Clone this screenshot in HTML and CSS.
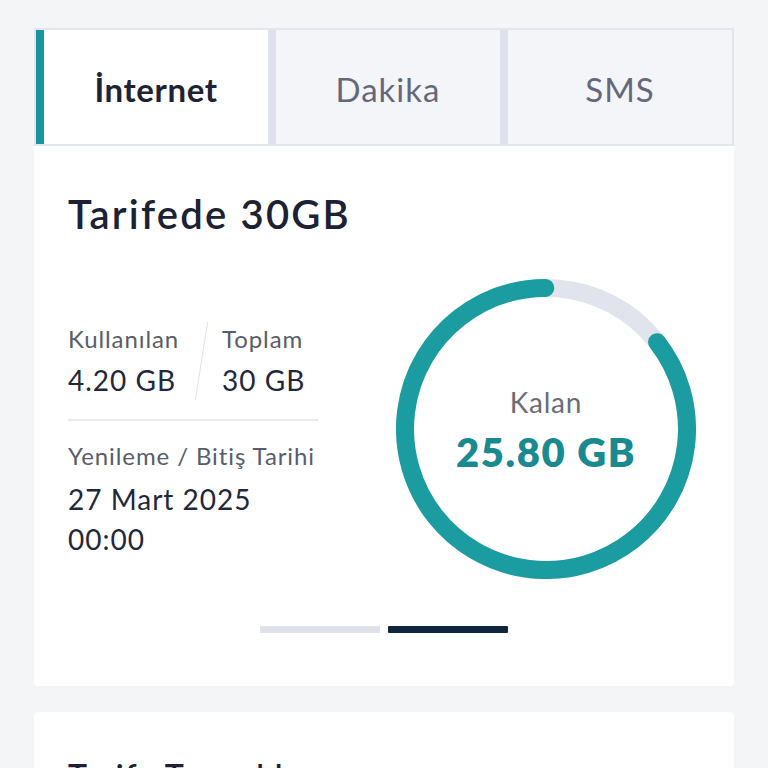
FILE: index.html
```html
<!DOCTYPE html>
<html lang="tr">
<head>
<meta charset="utf-8">
<link rel="stylesheet" href="styles.css">
</head>
<body>
<div class="wrap">
  <div class="card main">
    <div class="tabs">
      <div class="tab active">İnternet</div>
      <div class="tab">Dakika</div>
      <div class="tab">SMS</div>
    </div>
    <div class="body">
      <h1 class="title">Tarifede 30GB</h1>
      <div class="content">
        <div class="stats">
          <div class="pair">
            <div class="col">
              <div class="label">Kullanılan</div>
              <div class="value">4.20 GB</div>
            </div>
            <div class="slash"></div>
            <div class="col">
              <div class="label">Toplam</div>
              <div class="value">30 GB</div>
            </div>
          </div>
          <div class="hr"></div>
          <div class="label">Yenileme / Bitiş Tarihi</div>
          <div class="value date">27 Mart 2025<br>00:00</div>
        </div>
        <div class="ring">
          <svg viewBox="0 0 300 300" width="300" height="300">
            <circle cx="150" cy="150" r="141" fill="none" stroke="#e1e4ec" stroke-width="18"/>
            <circle cx="150" cy="150" r="141" fill="none" stroke="#1a9ca1" stroke-width="18" stroke-linecap="round" stroke-dasharray="757 886" transform="rotate(-38 150 150)"/>
          </svg>
          <div class="ring-text">
            <div class="kalan">Kalan</div>
            <div class="remain">25.80 GB</div>
          </div>
        </div>
      </div>
      <div class="dots">
        <span class="dot"></span>
        <span class="dot on"></span>
      </div>
    </div>
  </div>
  <div class="card second">
    <h2 class="sub">Tarife Tanımlıları</h2>
  </div>
</div>
</body>
</html>
```
FILE: styles.css
```css
* { box-sizing: border-box; }
html, body { margin: 0; padding: 0; }
body {
  background: #f4f5f7;
  font-family: Lato, "Noto Sans", sans-serif;
  color: #1f2336;
  height: 768px;
  overflow: hidden;
}
.wrap { padding: 28px 34px 0; }
.card { background: #fff; border-radius: 4px; }
.main { height: 658px; }
.tabs {
  display: grid;
  grid-template-columns: 232px 224px 224px;
  column-gap: 8px;
  background: #dfe2ea;
  border: 2px solid #e4e6ed;
  height: 118px;
}
.tab {
  display: flex;
  align-items: center;
  justify-content: center;
  background: #f4f5f9;
  font-size: 33px;
  letter-spacing: 1px;
  color: #65687a;
  padding-top: 4px;
}
.tab.active {
  background: #fff;
  border-left: 8px solid #17979c;
  font-weight: 700;
  color: #1f2232;
  letter-spacing: 0.6px;
}
.body { padding: 44px 34px 0; }
.title {
  margin: 0;
  font-size: 40px;
  line-height: 48px;
  font-weight: 600;
  letter-spacing: 2.2px;
  color: #1d2134;
}
.content {
  display: flex;
  align-items: center;
  justify-content: space-between;
  margin-top: 41px;
}
.stats { width: 250px; margin-top: 23px; }
.pair { display: flex; align-items: stretch; }
.col { display: flex; flex-direction: column; }
.pair .label { margin-top: -2px; margin-bottom: 2px; }
.slash {
  width: 1px;
  margin: 0 20px 0 22px;
  background: #e1e3e9;
  transform: skewX(-9deg);
}
.label {
  font-size: 24px;
  line-height: 38px;
  letter-spacing: 0.9px;
  color: #595d6a;
}
.value {
  font-size: 28px;
  line-height: 40px;
  letter-spacing: 1px;
  color: #23273a;
}
.hr {
  height: 2px;
  background: #e8eaee;
  margin: 19px 0 16px;
}
.date { line-height: 40px; margin-top: 4px; }
.ring {
  position: relative;
  width: 300px;
  height: 300px;
  margin-right: 4px;
}
.ring svg { display: block; }
.ring-text {
  position: absolute;
  inset: 0;
  display: flex;
  flex-direction: column;
  align-items: center;
  justify-content: center;
}
.kalan {
  font-size: 28px;
  line-height: 40px;
  letter-spacing: 0.8px;
  color: #6a6d78;
  margin-bottom: 6px;
}
.remain {
  font-size: 40px;
  line-height: 48px;
  font-weight: 800;
  letter-spacing: 1.6px;
  color: #188a90;
}
.dots {
  display: flex;
  justify-content: center;
  gap: 8px;
  margin-top: 47px;
}
.dot {
  width: 120px;
  height: 7px;
  background: #e0e2ea;
  border-radius: 1px;
}
.dot.on { background: #0f2441; }
.second {
  margin-top: 26px;
  height: 200px;
  padding: 44px 34px 0;
}
.sub {
  margin: 0;
  font-size: 32px;
  font-weight: 600;
  letter-spacing: 1.5px;
  color: #1d2134;
}
```
